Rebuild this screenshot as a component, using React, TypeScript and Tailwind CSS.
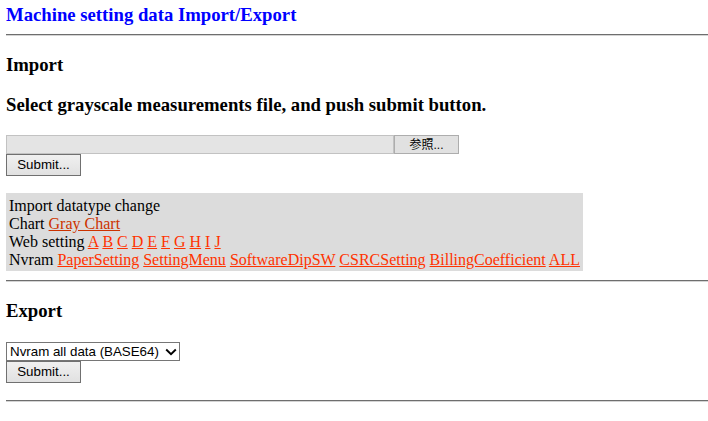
import React from 'react';

const SubmitButton = () => (
  <button
    type="button"
    className="block h-[22px] w-[75px] border border-[#707070] bg-[linear-gradient(#f0f0f0,#e1e1e1)] text-center font-['Liberation_Sans'] text-[13.33px] leading-[20px] text-black"
  >
    Submit...
  </button>
);

const Rule = () => (
  <div className="border-t border-b border-t-[#6e6e6e] border-b-[#d4d4d4]" />
);

const links = (items: string[]) =>
  items.map((item) => (
    <React.Fragment key={item}>
      {' '}
      <a href="#" className="text-[#ff3300] underline">
        {item}
      </a>
    </React.Fragment>
  ));

export default function App() {
  return (
    <div className="min-h-[421px] bg-white pl-[6px] font-['Liberation_Serif',serif] text-black">
      <div className="pt-[4px] text-[18.72px] leading-[21px] font-bold text-[#0000ff]">
        Machine setting data Import/Export
      </div>
      <div className="mt-[9px]">
        <Rule />
      </div>

      {/* Import */}
      <div className="mt-[18px] text-[18.72px] leading-[21px] font-bold">Import</div>
      <div className="mt-[19px] text-[18.72px] leading-[21px] font-bold">
        Select grayscale measurements file, and push submit button.
      </div>
      <div className="mt-[20px] flex h-[19px] w-[453px]">
        <div className="h-full flex-1 border border-[#c2c2c2] bg-[#e4e4e4]" />
        <div className="flex h-full w-[65px] items-center justify-center border border-[#adadad] bg-[#e1e1e1] font-['Liberation_Sans','Noto_Sans_CJK_JP',sans-serif] text-[12px] text-black">
          参照...
        </div>
      </div>
      <SubmitButton />

      <div className="mt-[17px] inline-block bg-[#dcdcdc] pt-[4px] pr-[3px] pb-[2px] pl-[3px] text-[16px] leading-[18px]">
        <div>Import datatype change</div>
        <div>
          Chart{' '}
          <a href="#" className="text-[#cc3300] underline">
            Gray Chart
          </a>
        </div>
        <div>Web setting{links(['A', 'B', 'C', 'D', 'E', 'F', 'G', 'H', 'I', 'J'])}</div>
        <div>
          Nvram
          {links([
            'PaperSetting',
            'SettingMenu',
            'SoftwareDipSW',
            'CSRCSetting',
            'BillingCoefficient',
            'ALL',
          ])}
        </div>
      </div>
      <div className="mt-[8px]">
        <Rule />
      </div>

      {/* Export */}
      <div className="mt-[18px] text-[18.72px] leading-[21px] font-bold">Export</div>
      <div className="mt-[21px] flex h-[19px] w-[174px] items-center justify-between border border-[#767676] bg-white pr-[2px] pl-[3px] font-['Liberation_Sans'] text-[13.33px] leading-[16px]">
        <span>Nvram all data (BASE64)</span>
        <svg width="12" height="8" viewBox="0 0 12 8" fill="none">
          <path d="M1.2 1.5 L6 6.2 L10.8 1.5" stroke="#000" strokeWidth="1.9" />
        </svg>
      </div>
      <SubmitButton />
      <div className="mt-[17px]">
        <Rule />
      </div>
    </div>
  );
}
